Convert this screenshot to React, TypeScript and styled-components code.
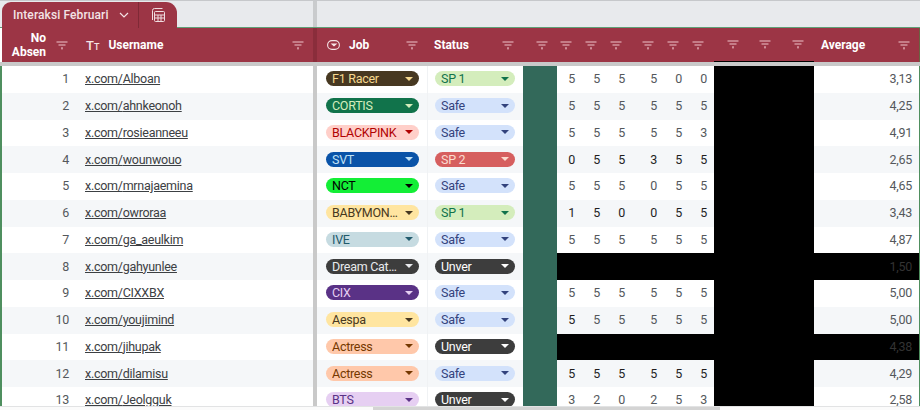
import React from 'react'
import styled, { createGlobalStyle } from 'styled-components'

const GlobalStyle = createGlobalStyle`
  html, body {
    margin: 0;
    padding: 0;
    background: #fff;
    overflow: hidden;
  }
  body {
    font-family: Roboto, "Liberation Sans", sans-serif;
  }
`

const columns = '70px 241px 4px 110px 96px 34px 25px 25px 25px 32px 25px 25px 35px 32px 33px 105px'
const maroon = '#9c3545'

const Sheet = styled.div`
  width: 920px;
  height: 410px;
  display: flex;
  flex-direction: column;
  overflow: hidden;
`

const TabBar = styled.div`
  height: 26px;
  flex: none;
  display: flex;
  background: #e8eaed;
  border-top: 1px solid #c6c8cb;
  border-bottom: 1px solid #5f9f76;
`

const TabSlot = styled.div`
  width: 311px;
  padding-left: 2px;
  display: flex;
  align-items: flex-end;
`

const Tab = styled.div`
  width: 175px;
  height: 26px;
  margin-bottom: -1px;
  display: flex;
  align-items: center;
  background: ${maroon};
  border-radius: 9px 11px 0 0;
  color: #f3e3e5;
  font-size: 12px;
  font-weight: 500;
  letter-spacing: 0.1px;
`

const TabName = styled.div`
  width: 137px;
  height: 100%;
  padding-left: 11px;
  box-sizing: border-box;
  display: flex;
  align-items: center;
  gap: 10px;
  border-right: 1px solid #7f2936;
`

const TabIcon = styled.div`
  flex: 1;
  display: flex;
  justify-content: center;
`

const BarDivider = styled.div`
  width: 4px;
  background: #c9cbcd;
`

const HeaderRow = styled.div`
  height: 34px;
  flex: none;
  margin-left: 2px;
  display: grid;
  grid-template-columns: ${columns};
  background: ${maroon};
  border-right: 1px solid #6b6342;
  color: #fff;
  font-size: 12px;
  font-weight: 700;
`

const HeadCell = styled.div<{ $black?: boolean; $pad?: number }>`
  display: flex;
  align-items: center;
  justify-content: flex-end;
  padding-right: ${(p) => p.$pad ?? 9}px;
  min-width: 0;
  box-sizing: border-box;
  ${(p) => p.$black && 'border-bottom: 1px solid #000;'}
`

const HeadLabel = styled.div<{ $left: number }>`
  flex: 1;
  display: flex;
  align-items: center;
  gap: 9px;
  padding-left: ${(p) => p.$left}px;
  min-width: 0;
`

const TwoLines = styled.div`
  flex: 1;
  text-align: right;
  line-height: 14px;
  padding-right: 10px;
`

const TypeIcon = styled.span`
  font-size: 13px;
  font-weight: 500;
  color: #f5e4e6;
  small {
    font-size: 9px;
  }
`

const HeadDivider = styled.div`
  background: #8a2d3b;
`

const GapLine = styled.div`
  height: 4px;
  flex: none;
  background: #c9c9c9;
`

const Body = styled.div`
  flex: 1;
  min-height: 0;
  overflow: hidden;
  border-left: 2px solid #4f8f5f;
  border-right: 1px solid #4f8f5f;
`

const Row = styled.div<{ $even: boolean }>`
  height: 26.75px;
  display: grid;
  grid-template-columns: ${columns};
  background: ${(p) => (p.$even ? '#f5f7f9' : '#fff')};
  color: #444746;
  font-size: 12.5px;
  letter-spacing: -0.27px;
`

const NumberCell = styled.div<{ $strong?: boolean; $pad?: number }>`
  display: flex;
  align-items: center;
  justify-content: flex-end;
  padding: 0 ${(p) => p.$pad ?? 7}px 1px 0;
  color: ${(p) => (p.$strong ? '#1f1f1f' : '#54585c')};
`

const LinkCell = styled.div`
  display: flex;
  align-items: center;
  padding: 0 0 1px 13px;
  a {
    color: #3c4043;
    text-decoration: underline;
  }
`

const FrozenLine = styled.div`
  background: #c9c9c9;
`

const ChipCell = styled.div<{ $ruled?: boolean }>`
  display: flex;
  align-items: center;
  padding: 0 0 1px ${(p) => (p.$ruled ? 7 : 9)}px;
  min-width: 0;
  ${(p) => p.$ruled && 'border-left: 1px solid #f0f2f4;'}
`

const Chip = styled.div<{ $bg: string; $fg: string; $w: number }>`
  width: ${(p) => p.$w}px;
  height: 15px;
  box-sizing: border-box;
  padding: 0 6px;
  display: flex;
  align-items: center;
  gap: 6px;
  border-radius: 8px;
  background: ${(p) => p.$bg};
  color: ${(p) => p.$fg};
  line-height: 15px;
`

const ChipText = styled.span`
  flex: 1;
  min-width: 0;
  white-space: nowrap;
  overflow: hidden;
  text-overflow: ellipsis;
`

const Caret = styled.span`
  flex: none;
  width: 0;
  height: 0;
  border-left: 4px solid transparent;
  border-right: 4px solid transparent;
  border-top: 4px solid currentColor;
`

const GreenCell = styled.div`
  background: #33695a;
`

const BlackCell = styled.div`
  background: #000;
`

const DimAverage = styled(NumberCell)`
  background: #000;
  color: #333;
`

const ScrollTrack = styled.div`
  height: 4px;
  flex: none;
  box-sizing: border-box;
  border-top: 1px solid #e2e3e4;
  padding-left: 373px;
  background: #fbfbfb;
`

const ScrollThumb = styled.div`
  width: 347px;
  height: 100%;
  background: #d4d4d4;
`

const chips: Record<string, [string, string]> = {
  'F1 Racer': ['#473821', '#f6d88f'],
  CORTIS: ['#11734b', '#d4edbc'],
  BLACKPINK: ['#ffcfc9', '#b10202'],
  SVT: ['#0a53a8', '#bfe1f6'],
  NCT: ['#13ee36', '#000'],
  BABYMONSTER: ['#ffe5a0', '#473821'],
  IVE: ['#c6dbe1', '#215a6c'],
  'Dream Catcher': ['#3d3d3d', '#e8eaed'],
  CIX: ['#5a3286', '#e6cff2'],
  Aespa: ['#ffe5a0', '#473821'],
  Actress: ['#ffc8aa', '#753800'],
  BTS: ['#e6cff2', '#5a3286'],
  Safe: ['#d3e2fb', '#33437d'],
  'SP 1': ['#d4edbc', '#11734b'],
  'SP 2': ['#d65f5f', '#fbdcd0'],
  Unver: ['#3d3d3d', '#fff'],
}

type Entry = {
  user: string
  job: string
  status: string
  scores?: number[]
  average: string
  strong?: number
}

// strong = how many leading scores are drawn darker
const entries: Entry[] = [
  { user: 'Alboan', job: 'F1 Racer', status: 'SP 1', scores: [5, 5, 5, 5, 0, 0], average: '3,13' },
  { user: 'ahnkeonoh', job: 'CORTIS', status: 'Safe', scores: [5, 5, 5, 5, 5, 5], average: '4,25' },
  { user: 'rosieanneeu', job: 'BLACKPINK', status: 'Safe', scores: [5, 5, 5, 5, 5, 3], average: '4,91' },
  { user: 'wounwouo', job: 'SVT', status: 'SP 2', scores: [0, 5, 5, 3, 5, 5], average: '2,65', strong: 6 },
  { user: 'mrnajaemina', job: 'NCT', status: 'Safe', scores: [5, 5, 5, 0, 5, 5], average: '4,65' },
  { user: 'owroraa', job: 'BABYMONSTER', status: 'SP 1', scores: [1, 5, 0, 0, 5, 5], average: '3,43', strong: 6 },
  { user: 'ga_aeulkim', job: 'IVE', status: 'Safe', scores: [5, 5, 5, 5, 5, 5], average: '4,87' },
  { user: 'gahyunlee', job: 'Dream Catcher', status: 'Unver', average: '1,50' },
  { user: 'CIXXBX', job: 'CIX', status: 'Safe', scores: [5, 5, 5, 5, 5, 5], average: '5,00' },
  { user: 'youjimind', job: 'Aespa', status: 'Safe', scores: [5, 5, 5, 5, 5, 5], average: '5,00', strong: 1 },
  { user: 'jihupak', job: 'Actress', status: 'Unver', average: '4,38' },
  { user: 'dilamisu', job: 'Actress', status: 'Safe', scores: [5, 5, 5, 5, 5, 5], average: '4,29', strong: 6 },
  { user: 'Jeolgguk', job: 'BTS', status: 'Unver', scores: [3, 2, 0, 2, 5, 3], average: '2,58' },
]

const FilterIcon = () => (
  <svg width="12" height="9" viewBox="0 0 12 9" fill="none" stroke="#eec4ca" strokeWidth="1">
    <path d="M0.5 1h11M2.5 4h7M5 7h2" />
    <path d="M5.5 7.5h1v1h-1z" fill="#eec4ca" stroke="none" />
  </svg>
)

const SheetIcon = () => (
  <svg width="16" height="16" viewBox="0 0 16 16" fill="none" stroke="#f0dde0" strokeWidth="1">
    <path d="M2.5 13V3.5a2 2 0 0 1 2-2h8" />
    <rect x="4.5" y="4.5" width="10" height="10" rx="1" />
    <path d="M4.5 8h10M4.5 11h10M8 8v6.5M11 8v6.5" />
  </svg>
)

const Chevron = () => (
  <svg width="10" height="6" viewBox="0 0 10 6" fill="none" stroke="#f3e3e5" strokeWidth="1.2">
    <path d="M1 1l4 4 4-4" />
  </svg>
)

const DropdownIcon = () => (
  <svg width="13" height="10" viewBox="0 0 13 10" fill="none" stroke="#f5e4e6" strokeWidth="1.1">
    <rect x="0.6" y="0.6" width="11.8" height="8.8" rx="4.4" />
    <path d="M5 4h4l-2 1.8z" fill="#f5e4e6" />
  </svg>
)

const App = () => (
  <Sheet>
    <GlobalStyle />
    <TabBar>
      <TabSlot>
        <Tab>
          <TabName>
            Interaksi Februari
            <Chevron />
          </TabName>
          <TabIcon>
            <SheetIcon />
          </TabIcon>
        </Tab>
      </TabSlot>
      <BarDivider />
    </TabBar>

    <HeaderRow>
      <HeadCell $pad={4}>
        <TwoLines>
          No
          <br />
          Absen
        </TwoLines>
        <FilterIcon />
      </HeadCell>
      <HeadCell>
        <HeadLabel $left={14}>
          <TypeIcon>
            T<small>T</small>
          </TypeIcon>
          Username
        </HeadLabel>
        <FilterIcon />
      </HeadCell>
      <HeadDivider />
      <HeadCell>
        <HeadLabel $left={10}>
          <DropdownIcon />
          Job
        </HeadLabel>
        <FilterIcon />
      </HeadCell>
      <HeadCell>
        <HeadLabel $left={7}>Status</HeadLabel>
        <FilterIcon />
      </HeadCell>
      {[0, 1, 2, 3, 4, 5, 6].map((i) => (
        <HeadCell key={i} $pad={i === 0 ? 9 : 10}>
          <FilterIcon />
        </HeadCell>
      ))}
      {[0, 1, 2].map((i) => (
        <HeadCell key={i} $black $pad={10}>
          <FilterIcon />
        </HeadCell>
      ))}
      <HeadCell>
        <HeadLabel $left={7}>Average</HeadLabel>
        <FilterIcon />
      </HeadCell>
    </HeaderRow>
    <GapLine />

    <Body>
      {entries.map((entry, i) => (
        <Row key={entry.user} $even={i % 2 === 1}>
          <NumberCell $pad={3}>{i + 1}</NumberCell>
          <LinkCell>
            <a href="#">x.com/{entry.user}</a>
          </LinkCell>
          <FrozenLine />
          <ChipCell>
            <Chip $bg={chips[entry.job][0]} $fg={chips[entry.job][1]} $w={93}>
              <ChipText>{entry.job}</ChipText>
              <Caret />
            </Chip>
          </ChipCell>
          <ChipCell $ruled>
            <Chip $bg={chips[entry.status][0]} $fg={chips[entry.status][1]} $w={80}>
              <ChipText>{entry.status}</ChipText>
              <Caret />
            </Chip>
          </ChipCell>
          <GreenCell />
          {entry.scores
            ? entry.scores.map((score, k) => (
                <NumberCell key={k} $strong={k < (entry.strong ?? 0)}>
                  {score}
                </NumberCell>
              ))
            : [0, 1, 2, 3, 4, 5].map((k) => <BlackCell key={k} />)}
          <BlackCell />
          <BlackCell />
          <BlackCell />
          {entry.scores ? (
            <NumberCell>{entry.average}</NumberCell>
          ) : (
            <DimAverage>{entry.average}</DimAverage>
          )}
        </Row>
      ))}
    </Body>

    <ScrollTrack>
      <ScrollThumb />
    </ScrollTrack>
  </Sheet>
)

export default App
